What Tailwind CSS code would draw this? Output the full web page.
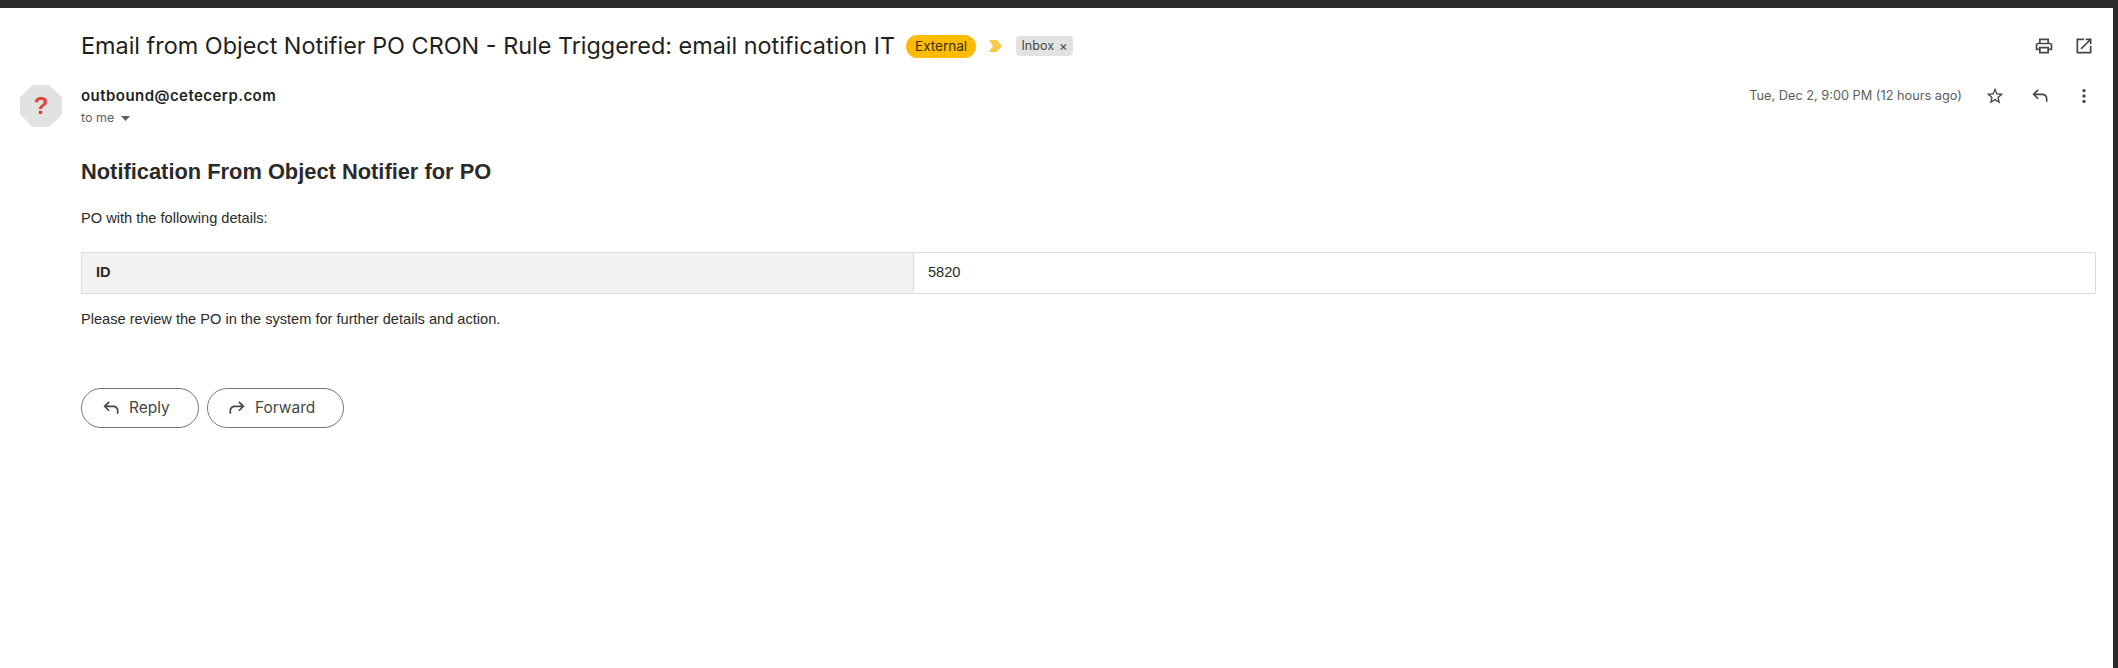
<!DOCTYPE html>
<html lang="en">
<head>
  <meta charset="UTF-8" />
  <title>Email from Object Notifier PO CRON</title>
  <script src="https://cdn.jsdelivr.net/npm/@tailwindcss/browser@4"></script>
</head>
<body class="h-screen overflow-hidden bg-white flex flex-col font-['Inter',sans-serif]">
  <div class="h-2 shrink-0 bg-[#2b2b2b]"></div>
  <div class="flex flex-1 min-h-0">
    <main class="flex-1 relative">

      <!-- subject -->
      <div class="flex items-center h-[28px] mt-[24px] pl-[81px] pr-[19px]">
        <h1 class="text-[23.400px] leading-[28px] text-[#1f1f1f] whitespace-nowrap">Email from Object Notifier PO CRON - Rule Triggered: email notification IT</h1>
        <span class="ml-[11px] h-[23px] w-[70px] flex items-center justify-center rounded-full bg-[#fdbb02] text-[13.500px] text-[#3c3200]">External</span>
        <svg class="ml-[13px]" width="14" height="12" viewBox="0 0 14 12"><path d="M0 0h7.500l5.500 6-5.500 6H0l4-6z" fill="#f9c846"/></svg>
        <span class="ml-[13px] h-[20px] w-[57px] flex items-center justify-center gap-[5px] rounded-[4px] bg-[#e1e3e1] text-[12.500px] text-[#444746]">Inbox <span class="text-[13px] leading-none">×</span></span>
        <div class="ml-auto flex items-center gap-[20px]">
          <svg width="20" height="20" viewBox="0 0 24 24" fill="#444746"><path d="M19 8h-1V3H6v5H5c-1.660 0-3 1.340-3 3v6h4v4h12v-4h4v-6c0-1.660-1.340-3-3-3zM8 5h8v3H8V5zm8 14H8v-4h8v4zm4-4h-2v-2H6v2H4v-4c0-.550.450-1 1-1h14c.550 0 1 .450 1 1v4z"/></svg>
          <svg width="20" height="20" viewBox="0 0 24 24" fill="#444746"><path d="M19 19H5V5h7V3H3v18h18v-9h-2v7zM14 3v2h3.590l-9.830 9.830 1.410 1.410L19 6.410V10h2V3h-7z"/></svg>
        </div>
      </div>

      <!-- sender -->
      <div class="flex mt-[26px] pl-[20px] pr-[19px]">
        <div class="w-[42px] h-[42px] mt-[-1px] shrink-0 bg-[#e2e2e2] [clip-path:polygon(30%_0,70%_0,100%_30%,100%_70%,70%_100%,30%_100%,0_70%,0_30%)] flex items-center justify-center">
          <span class="font-['Liberation_Sans',sans-serif] font-bold text-[24px] leading-none text-[#e0453a]">?</span>
        </div>
        <div class="ml-[19px]">
          <div class="text-[15px] leading-[20px] font-semibold tracking-[0.450px] text-[#1f1f1f] h-[20px]">outbound@cetecerp.com</div>
          <div class="flex items-center text-[12.500px] leading-[20px] mt-[2px] text-[#5e5e5e]">to me
            <svg class="ml-[7px]" width="9" height="5" viewBox="0 0 9 5"><path d="M0 0h9L4.500 5z" fill="#5e5e5e"/></svg>
          </div>
        </div>
        <div class="ml-auto flex items-start">
          <span class="text-[12.750px] leading-[20px] text-[#5e5e5e]">Tue, Dec 2, 9:00 PM (12 hours ago)</span>
          <svg class="ml-[23px]" width="20" height="20" viewBox="0 0 24 24" fill="#444746"><path d="M22 9.240l-7.190-.620L12 2 9.190 8.630 2 9.240l5.460 4.730L5.820 21 12 17.270 18.180 21l-1.630-7.030L22 9.240zM12 15.400l-3.760 2.270 1-4.280-3.320-2.880 4.380-.380L12 6.100l1.710 4.040 4.380.380-3.320 2.880 1 4.280L12 15.400z"/></svg>
          <svg class="ml-[25px]" width="20" height="20" viewBox="0 0 24 24" fill="#444746"><path d="M21 19v-4c0-3.300-2.700-6-6-6H6.830l3.590-3.590L9 4l-6 6 6 6 1.410-1.410L6.830 11H15c2.200 0 4 1.800 4 4v4h2z"/></svg>
          <svg class="ml-[24px]" width="20" height="20" viewBox="0 0 24 24" fill="#444746"><circle cx="12" cy="5.500" r="2"/><circle cx="12" cy="12" r="2"/><circle cx="12" cy="18.500" r="2"/></svg>
        </div>
      </div>

      <!-- body -->
      <div class="pl-[81px] pr-[17px] font-['Liberation_Sans',sans-serif] text-[#2a2a2a]">
        <h2 class="mt-[31px] text-[21.850px] leading-[26px] font-bold">Notification From Object Notifier for PO</h2>
        <p class="mt-[23px] text-[14.600px] leading-[20px]">PO with the following details:</p>
        <table class="mt-[24px] w-full border-collapse text-[14.600px]">
          <tbody>
            <tr class="h-[41px]">
              <th class="w-[832px] px-[14px] text-left font-bold bg-[#f2f2f2] border border-[#dddddd]">ID</th>
              <td class="px-[14px] border border-[#dddddd]">5820</td>
            </tr>
          </tbody>
        </table>
        <p class="mt-[15px] text-[14.600px] leading-[20px]">Please review the PO in the system for further details and action.</p>
      </div>

      <!-- actions -->
      <div class="flex gap-[8px] mt-[59px] pl-[81px]">
        <button class="h-[40px] w-[118px] flex items-center pl-[19px] rounded-full border border-[#747775] text-[15.500px] text-[#444746]">
          <svg width="20" height="20" viewBox="0 0 24 24" fill="#444746"><path d="M21 19v-4c0-3.300-2.700-6-6-6H6.830l3.590-3.590L9 4l-6 6 6 6 1.410-1.410L6.830 11H15c2.200 0 4 1.800 4 4v4h2z"/></svg>
          <span class="ml-[8px]">Reply</span>
        </button>
        <button class="h-[40px] w-[137px] flex items-center pl-[19px] rounded-full border border-[#747775] text-[15.500px] text-[#444746]">
          <svg width="20" height="20" viewBox="0 0 24 24" fill="#444746"><path d="M3 19v-4c0-3.300 2.700-6 6-6h8.170l-3.590-3.590L15 4l6 6-6 6-1.410-1.410L17.170 11H9c-2.200 0-4 1.800-4 4v4H3z"/></svg>
          <span class="ml-[8px]">Forward</span>
        </button>
      </div>
    </main>
    <div class="w-[5px] shrink-0 bg-[#2b2b2b]"></div>
  </div>
</body>
</html>
